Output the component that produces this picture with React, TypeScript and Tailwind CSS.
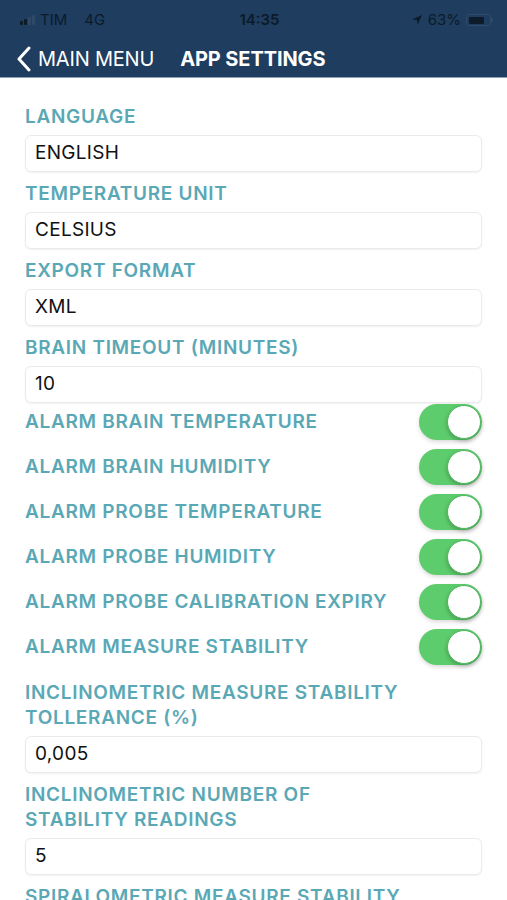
import React from "react";

const font = { fontFamily: "Inter, 'Liberation Sans', sans-serif" };

function Label({ children }: { children: React.ReactNode }) {
  return (
    <div className="text-[19px] leading-[25px] font-semibold text-[#5aa8b5] tracking-[0.7px]">
      {children}
    </div>
  );
}

function Field({ value }: { value: string }) {
  return (
    <div className="mt-[6px] h-[37px] rounded-[6px] border border-[#ebebeb] bg-white shadow-[0_1px_2px_rgba(0,0,0,0.06)] flex items-center px-[9px] text-[19px] text-[#111] tracking-[0.3px]">
      {value}
    </div>
  );
}

function Toggle() {
  return (
    <div className="relative w-[63px] h-[36px] rounded-full bg-[#5dcc6c] shadow-[0_2px_4px_rgba(0,0,0,0.15)]">
      <div className="absolute right-[1px] top-[1px] w-[34px] h-[34px] rounded-full bg-white border border-[#4fb85e] shadow-[0_2px_4px_rgba(0,0,0,0.25)]" />
    </div>
  );
}

function ToggleRow({ label }: { label: string }) {
  return (
    <div className="h-[45px] flex items-center justify-between">
      <Label>{label}</Label>
      <Toggle />
    </div>
  );
}

export default function App() {
  return (
    <div className="w-[507px] h-[900px] overflow-hidden bg-white" style={font}>
      <div className="bg-[#1e3d5f] h-[78px] border-b border-[#8ca0b4]">
        <div className="h-[40px] flex items-center justify-between pl-[20px] pr-[14px] text-[#0d1a29] text-[15px]">
          <div className="flex items-center gap-[5px] w-[120px]">
            <div className="flex items-end gap-[1px] h-[10px]">
              <div className="w-[3px] h-[4px] bg-[#0d1a29] rounded-[1px]" />
              <div className="w-[3px] h-[6px] bg-[#0d1a29] rounded-[1px]" />
              <div className="w-[3px] h-[8px] bg-[#2e4a68] rounded-[1px]" />
              <div className="w-[3px] h-[10px] bg-[#2e4a68] rounded-[1px]" />
            </div>
            <span>TIM</span>
            <span className="ml-[12px]">4G</span>
          </div>
          <div className="font-semibold text-[15px] ml-[6px]">14:35</div>
          <div className="flex items-center gap-[5px] w-[120px] justify-end">
            <svg width="12" height="12" viewBox="0 0 12 12">
              <path d="M11 1 L1 5.5 L6 6 L6.5 11 Z" fill="#0d1a29" />
            </svg>
            <span>63%</span>
            <div className="flex items-center">
              <div className="w-[25px] h-[12px] rounded-[3px] border border-[#2e4a68] p-[1.5px]">
                <div className="w-[15px] h-full bg-[#0d1a29] rounded-[1px]" />
              </div>
              <div className="w-[2px] h-[4px] bg-[#2e4a68] rounded-r-[1px]" />
            </div>
          </div>
        </div>
        <div className="h-[38px] flex items-center pl-[16px]">
          <svg width="16" height="26" viewBox="0 0 16 26" className="mr-[6px]">
            <path d="M13 2 L3 13 L13 24" stroke="white" strokeWidth="3" fill="none" strokeLinecap="round" strokeLinejoin="round" />
          </svg>
          <span className="text-white text-[20px] tracking-[-0.2px]">MAIN MENU</span>
          <span className="text-white text-[20px] font-bold ml-[26px] tracking-[-0.1px]">APP SETTINGS</span>
        </div>
      </div>
      <div className="px-[25px] pt-[26px] flex flex-col">
        <Label>LANGUAGE</Label>
        <Field value="ENGLISH" />
        <div className="mt-[9px]"><Label>TEMPERATURE UNIT</Label></div>
        <Field value="CELSIUS" />
        <div className="mt-[9px]"><Label>EXPORT FORMAT</Label></div>
        <Field value="XML" />
        <div className="mt-[9px]"><Label>BRAIN TIMEOUT (MINUTES)</Label></div>
        <Field value="10" />
        <div className="mt-[-4px] flex flex-col">
          <ToggleRow label="ALARM BRAIN TEMPERATURE" />
          <ToggleRow label="ALARM BRAIN HUMIDITY" />
          <ToggleRow label="ALARM PROBE TEMPERATURE" />
          <ToggleRow label="ALARM PROBE HUMIDITY" />
          <ToggleRow label="ALARM PROBE CALIBRATION EXPIRY" />
          <ToggleRow label="ALARM MEASURE STABILITY" />
        </div>
        <div className="mt-[11px]">
          <Label>INCLINOMETRIC MEASURE STABILITY<br />TOLLERANCE (%)</Label>
        </div>
        <Field value="0,005" />
        <div className="mt-[9px]">
          <Label>INCLINOMETRIC NUMBER OF<br />STABILITY READINGS</Label>
        </div>
        <Field value="5" />
        <div className="mt-[9px]">
          <Label>SPIRALOMETRIC MEASURE STABILITY<br />TOLLERANCE (%)</Label>
        </div>
      </div>
    </div>
  );
}
